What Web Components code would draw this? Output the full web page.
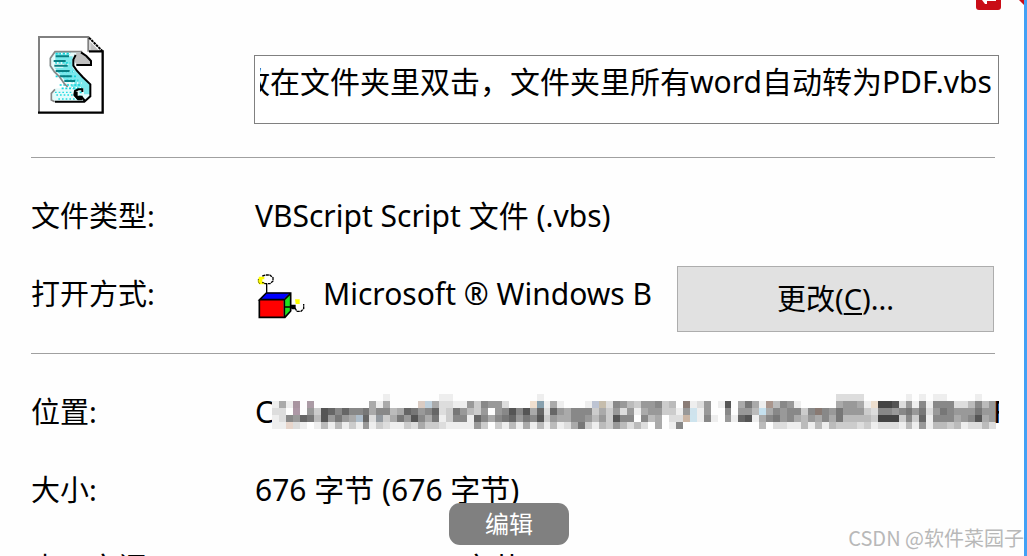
<!DOCTYPE html>
<html lang="zh-CN">
<head>
<meta charset="utf-8">
<title>文件属性</title>
<style>
    html, body {
        height: 100%;
        margin: 0;
    }
    body {
        background: #fefefe;
        color: #000;
        font-family: "Noto Sans", "Noto Sans CJK SC", sans-serif;
        font-size: 30px;
        line-height: 40px;
        overflow: hidden;
    }
</style>
</head>
<body>
<file-properties>
    <file-header slot="header" name="放在文件夹里双击，文件夹里所有word自动转为PDF.vbs"></file-header>
    <property-group>
        <property-row label="文件类型:">VBScript Script 文件 (.vbs)</property-row>
        <property-row label="打开方式:"><open-with>Microsoft ® Windows B</open-with></property-row>
    </property-group>
    <property-group>
        <property-row label="位置:"><masked-path start="C" end="F"></masked-path></property-row>
        <property-row label="大小:">676 字节 (676 字节)</property-row>
        <property-row label="占用空间:">4.00 KB (4,096 字节)</property-row>
    </property-group>
    <return-badge slot="overlay"></return-badge>
    <edit-pill slot="overlay">编辑</edit-pill>
    <water-mark slot="overlay">CSDN @软件菜园子</water-mark>
</file-properties>

<script>
class BaseElement extends HTMLElement {
    constructor() {
        super();
        const template = document.createElement('template');
        template.innerHTML = this.constructor.localStyles
            + this.constructor.html;
        this.attachShadow({ mode: 'open' });
        this.shadowRoot.appendChild(template.content.cloneNode(true));
    }
}

class FileProperties extends BaseElement {
    static get localStyles() {
        return `
        <style>
        :host {
            display: block;
            position: relative;
            box-sizing: border-box;
            height: 100vh;
            overflow: hidden;
            padding: 36px 25px 0 31px;
            border-right: 3px solid #42a1f5;
        }
        .corner {
            position: absolute;
            top: 0;
            right: -3px;
            width: 8px;
            height: 8px;
            background: #c90d17;
            clip-path: polygon(0 0, 100% 0, 100% 100%);
        }
        </style>
        `;
    }

    static get html() {
        return `
        <slot name="header"></slot>
        <slot></slot>
        <div class="corner"></div>
        <slot name="overlay"></slot>
        `;
    }
}

class FileHeader extends BaseElement {
    static get localStyles() {
        return `
        <style>
        :host {
            display: grid;
            grid-template-columns: 223px 1fr;
            height: 121px;
        }
        svg {
            display: block;
            margin-left: 7px;
        }
        input {
            box-sizing: border-box;
            width: 100%;
            height: 69px;
            margin: 19px 0 0;
            padding: 0 6px 20px 5px;
            border: 1px solid #808080;
            border-radius: 0;
            outline: none;
            background: #fff;
            color: inherit;
            font: inherit;
        }
        </style>
        `;
    }

    static get html() {
        return `
        <svg width="66" height="78" viewBox="55 45 198 234" aria-hidden="true">
            <path fill="#fff" d="M58 48h150l40 42v186H58z"/>
            <path fill="none" stroke="#808080" stroke-width="6" d="M58 276V48h148v44"/>
            <path fill="none" stroke="#000" stroke-width="7" d="M55 275h194V91h-41"/>
            <path fill="none" stroke="#000" stroke-width="6" stroke-dasharray="8 2" d="M208 50l40 40"/>
            <path fill="#c0c0c0" d="M212 62l24 25h-24z"/>
            <path fill="#e4fbfb" d="M105 92h80l-20 20v28l45 46v44l-20 14h-84l-12-14v-14l14-14h38l-42-44-14-16v-34z"/>
            <path fill="#7be8ec" d="M107 94h48l-8 12h12v34l20 20 32 30v30h-18v-18h-12l-14 6-14-10 12-12-28-6-32-40h26v-20h-24z"/>
            <path fill="none" stroke="#12d6dc" stroke-width="5" stroke-dasharray="6 5" d="M108 98h44m-46 28h46m-38 26h48m-54 14h62m-30 12h36m-56 14h66m-60 10h64m-10 12h10m-12 12h12"/>
            <path fill="none" stroke="#fff" stroke-width="4" stroke-dasharray="4 8" d="M124 98h28m-46 32h46m-28 22h38m-26 34h50m-42 14h48"/>
            <path fill="none" stroke="#24dce0" stroke-width="4" stroke-dasharray="5 6" d="M106 214h52m-48 8h50m-44 12h56"/>
            <path fill="none" stroke="#087f83" stroke-width="6" d="M108 106h40m-46 14h36m-34 14h40m-36 16h42m-30 16h36m-22 14h32"/>
            <path fill="#c0c0c0" d="M170 96h20l24 18v18h-42l-10-14z"/>
            <path fill="none" stroke="#888" stroke-width="5" d="M188 92h-82l-14 20v22l12 18 16 16 14 20 10 10M106 205l-11 12v20l10 5"/>
            <path fill="none" stroke="#000" stroke-width="6" d="M184 94l16 11 14 15v12h-44M168 102l-7 14v18l10 14 18 20 23 22v36l-18 16h-88M196 240l-10-12-12 4-10-10 2-12 10-5h12v8"/>
            <path fill="#000" d="M164 212h10v12h14v14h-14l-10-12z"/>
        </svg>
        <input type="text" aria-label="文件名" spellcheck="false">
        `;
    }

    connectedCallback() {
        this.input = this.shadowRoot.querySelector('input');
        this.input.value = this.getAttribute('name');
        // long names show their end, with the extension
        this.input.scrollLeft = this.input.scrollWidth;
    }
}

class PropertyGroup extends BaseElement {
    static get localStyles() {
        return `
        <style>
        :host {
            display: block;
        }
        hr {
            height: 1px;
            margin: 0 4px 19px 0;
            border: 0;
            background: #a0a0a0;
        }
        .rows {
            display: grid;
            grid-auto-rows: 78px;
            height: 176px;
        }
        </style>
        `;
    }

    static get html() {
        return `
        <hr>
        <div class="rows"><slot></slot></div>
        `;
    }
}

class PropertyRow extends BaseElement {
    static get localStyles() {
        return `
        <style>
        :host {
            display: grid;
            grid-template-columns: 224px minmax(0, 1fr);
            align-items: center;
            white-space: nowrap;
        }
        .label {
            font-size: 29px;
        }
        </style>
        `;
    }

    static get html() {
        return `
        <span class="label"></span>
        <div class="value"><slot></slot></div>
        `;
    }

    connectedCallback() {
        this.shadowRoot.querySelector('.label').textContent = this.getAttribute('label');
    }
}

class OpenWith extends BaseElement {
    static get localStyles() {
        return `
        <style>
        :host {
            display: flex;
            align-items: center;
        }
        svg {
            flex: none;
            margin: 6px 18px 0 2px;
        }
        .app {
            flex: 1;
            min-width: 0;
            overflow: hidden;
        }
        button {
            flex: none;
            box-sizing: border-box;
            width: 317px;
            height: 66px;
            margin: 10px 5px 0 18px;
            padding: 0;
            border: 1px solid #adadad;
            border-radius: 0;
            background: #e1e1e1;
            color: inherit;
            font: inherit;
            font-size: 29px;
        }
        u {
            text-decoration-thickness: 2px;
            text-underline-offset: 3px;
        }
        </style>
        `;
    }

    static get html() {
        return `
        <svg width="48" height="46" viewBox="36 34 144 138" aria-hidden="true">
            <path fill="#ff0" d="M42 42h16v8h-6v8h6v7H42l-4-10zM150 110h14v14h-12z"/>
            <path fill="none" stroke="#000" stroke-width="4" stroke-dasharray="9 2" d="M52 40l10-3h12l10 8v10l-9 8H60l-8-4"/>
            <path fill="none" stroke="#000" stroke-width="4" d="M65 64v28"/>
            <path fill="none" stroke="#000" stroke-width="3" stroke-dasharray="3 4" d="M40 50v8l5 6"/>
            <path fill="#00f" d="M64 90h72l-20 20H44z"/>
            <path fill="#1ee11e" d="M136 90v54l-18 20v-54z"/>
            <path fill="#f00" d="M44 112h72v52H44z"/>
            <path fill="none" stroke="#000" stroke-width="5" d="M43 112v52h75v-53H44l20-20h73v54l-18 20M118 111l18-18M118 133h26"/>
            <path fill="#000" d="M136 126h16v14h-10l-6-4z"/>
            <path fill="none" stroke="#000" stroke-width="4" stroke-dasharray="9 2" d="M150 136l6 10h12l8-8v-14"/>
        </svg>
        <div class="app"><slot></slot></div>
        <button type="button">更改(<u>C</u>)...</button>
        `;
    }
}

// grey levels of the mosaic, one hex digit for each 7px block
const MASK = [
    'ffffffffffffffffefffffffeeffffffffffffeffffffffffff' + 'ffffffffffffffffffffffffffffffddddffffffefefeeffffeff',
    'eaeafaffffffffaeaffffccaddee9c899dfffd8eaefffecbd89' + 'bc998cbf7ed9fe5fa7ae8b89efffffa99aee445d9e8e888ddb8b9',
    'ddfaf9c5686887a88ba67986dc79bc9f98585a6d69a888cac9d' + '9ea99cce9de9ff8f99bca8988c85897999cd8898797d978999799',
    'ed8967b5979a96d8ca7958a7ec88e68a8769785c9aa889b9c58' + '8f8bafddbde8ef9e65ea8798ab9a8a7bbbbc444c8c6e888a985a9',
    'eecdefebebece9ecdeecdaccdeeee9cfcebeaebebeda7cebc9b' + 'dbdfafe8fffffffffffbfddeebebebcccdcedddebe9ebbcbeddbd'
];

// blocks that keep some colour: column, row, colour
const TINTS = [
    [3, 1, '#a894a0'], [5, 1, '#ab9ba5'], [3, 2, '#ad98a6'], [2, 4, '#e7d5cb'],
    [21, 1, '#dacbc2'], [22, 1, '#bfd0dc'], [15, 3, '#93999f'], [12, 3, '#aebdca'],
    [37, 1, '#f0dfcf'], [38, 1, '#87a0ae'], [46, 1, '#bdc4d3'], [47, 1, '#c6bdac'],
    [59, 1, '#8b7d77'], [60, 2, '#cfe3ed'], [59, 3, '#cbb6a5'], [60, 3, '#cee4ee'],
    [70, 2, '#c5e0ee'], [71, 1, '#aa968d'], [78, 2, '#897a73'], [86, 1, '#ecdece']
];

class MaskedPath extends BaseElement {
    static get localStyles() {
        return `
        <style>
        :host {
            display: flex;
            align-items: center;
            overflow: hidden;
        }
        .start, .end {
            flex: none;
            overflow: hidden;
        }
        .start {
            width: 17px;
        }
        .end {
            width: 6px;
            margin-left: -3px;
        }
        svg {
            flex: 1;
            min-width: 0;
            height: 35px;
            margin-bottom: 2px;
        }
        </style>
        `;
    }

    static get html() {
        return `
        <span class="start"></span>
        <svg viewBox="0 0 104 5" preserveAspectRatio="none" shape-rendering="crispEdges" aria-hidden="true"></svg>
        <span class="end"></span>
        `;
    }

    connectedCallback() {
        const root = this.shadowRoot;
        root.querySelector('.start').textContent = this.getAttribute('start');
        root.querySelector('.end').textContent = this.getAttribute('end');
        const block = (x, y, fill) => `<rect x="${x}" y="${y}" width="1" height="1" fill="${fill}"/>`;
        let blocks = '';
        MASK.forEach((row, y) => {
            [...row].forEach((level, x) => {
                if (level !== 'f') {
                    blocks += block(x, y, '#' + level.repeat(3));
                }
            });
        });
        TINTS.forEach(([x, y, fill]) => {
            blocks += block(x, y, fill);
        });
        root.querySelector('svg').innerHTML = blocks;
    }
}

class ReturnBadge extends BaseElement {
    static get localStyles() {
        return `
        <style>
        :host {
            position: absolute;
            top: 0;
            right: 23px;
            width: 25px;
            height: 10px;
            border-radius: 0 0 3px 3px;
            background: #c90d17;
        }
        svg {
            display: block;
        }
        </style>
        `;
    }

    static get html() {
        return `
        <svg width="25" height="10" viewBox="0 0 25 10" aria-hidden="true">
            <path fill="#fff" d="M6 0h14v1h-9v3h-2z"/>
        </svg>
        `;
    }
}

class EditPill extends BaseElement {
    static get localStyles() {
        return `
        <style>
        :host {
            position: absolute;
            bottom: 11px;
            left: 449px;
        }
        button {
            display: block;
            width: 120px;
            height: 42px;
            padding: 0;
            border: 0;
            border-radius: 11px;
            background: #808080;
            color: #fff;
            font: inherit;
            font-size: 24px;
        }
        </style>
        `;
    }

    static get html() {
        return `<button type="button"><slot></slot></button>`;
    }
}

class WaterMark extends BaseElement {
    static get localStyles() {
        return `
        <style>
        :host {
            position: absolute;
            right: 0;
            bottom: 4px;
            color: #b8b8b8;
            font-family: "Noto Sans CJK SC", sans-serif;
            font-size: 20px;
            line-height: 28px;
        }
        </style>
        `;
    }

    static get html() {
        return `<slot></slot>`;
    }
}

customElements.define('file-properties', FileProperties);
customElements.define('file-header', FileHeader);
customElements.define('property-group', PropertyGroup);
customElements.define('property-row', PropertyRow);
customElements.define('open-with', OpenWith);
customElements.define('masked-path', MaskedPath);
customElements.define('return-badge', ReturnBadge);
customElements.define('edit-pill', EditPill);
customElements.define('water-mark', WaterMark);
</script>
</body>
</html>
